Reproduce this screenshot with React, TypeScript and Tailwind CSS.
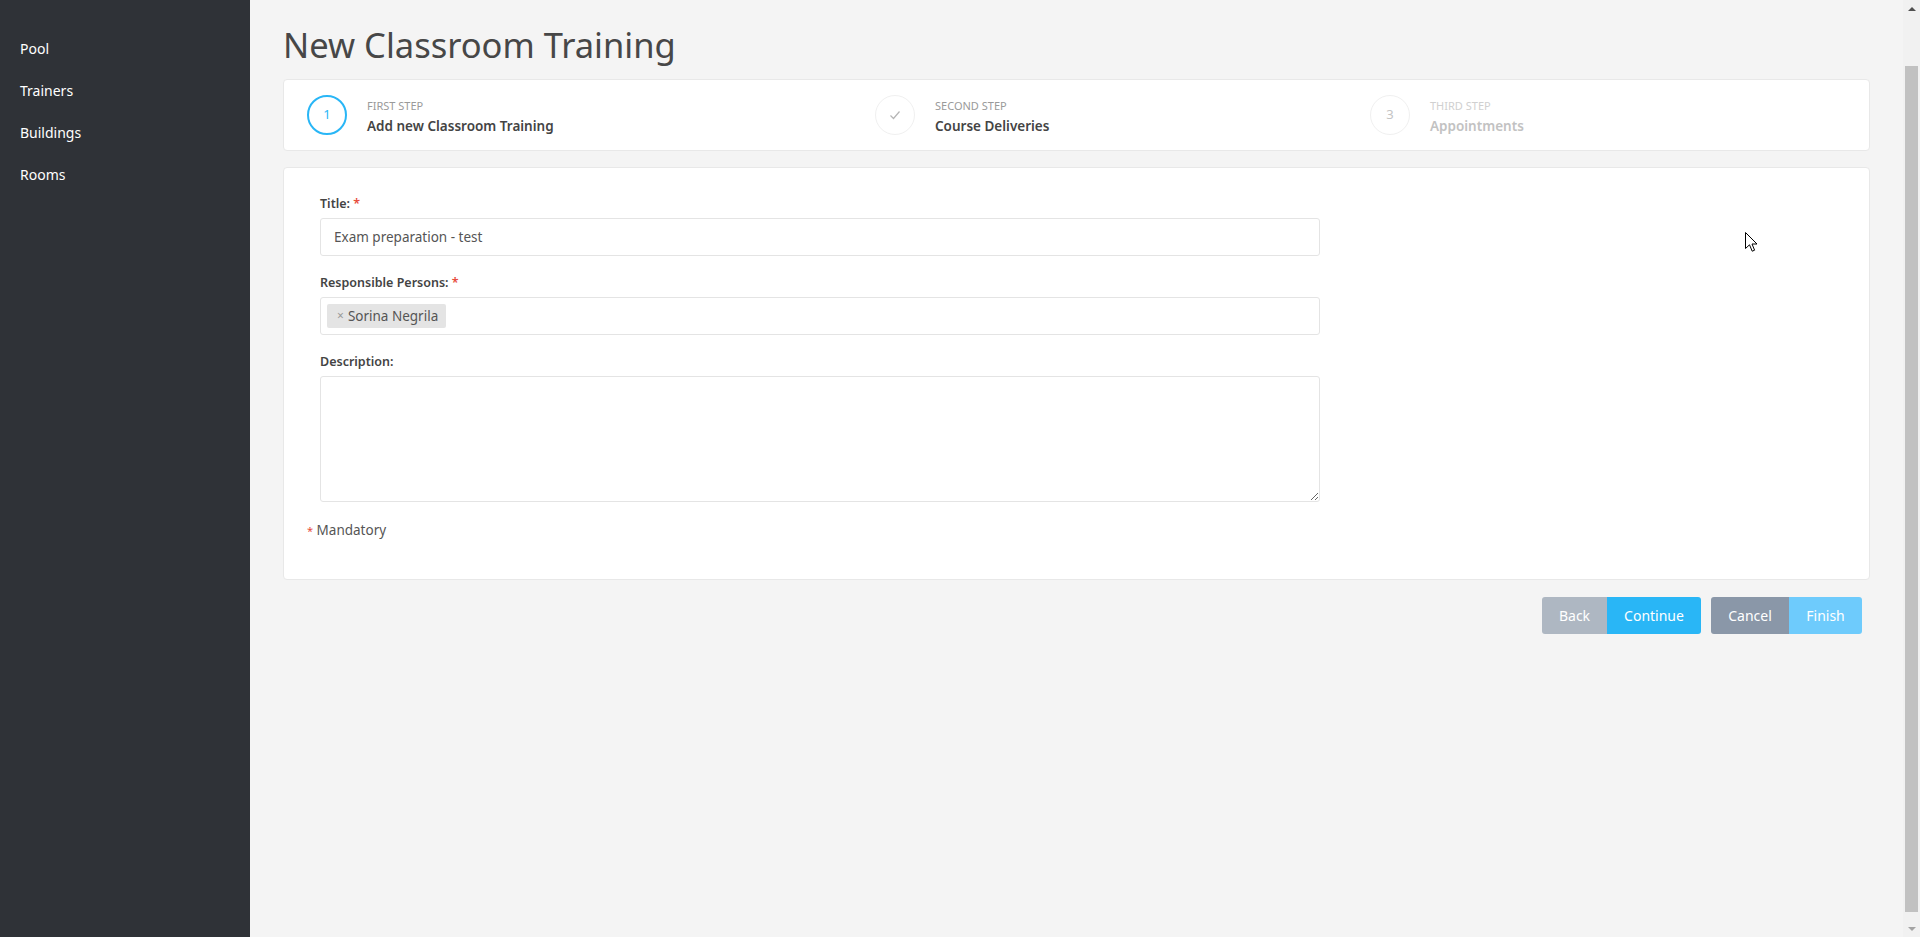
import React from "react";

const font = { fontFamily: '"Noto Sans", "Open Sans", Arial, sans-serif' };

function Check() {
  return (
    <svg width="14" height="14" viewBox="0 0 14 14" fill="none">
      <path d="M2.5 7.5 L5.5 10.5 L11.5 3.5" stroke="#b5b5b5" strokeWidth="1.2" />
    </svg>
  );
}

function Step({
  circle,
  label,
  title,
  variant,
  className,
}: {
  circle: React.ReactNode;
  label: string;
  title: string;
  variant: "active" | "done" | "todo";
  className?: string;
}) {
  const circleCls =
    variant === "active"
      ? "border-2 border-[#29b6f6] text-[#29b6f6]"
      : "border border-[#f0f0f0] text-[#c4c4c4]";
  const labelCls = variant === "todo" ? "text-[#d0d0d0]" : "text-[#9a9a9a]";
  const titleCls =
    variant === "todo" ? "text-[#c2c2c2]" : "text-[#444]";
  return (
    <div className={"flex items-center " + (className ?? "")}>
      <div
        className={
          "flex h-10 w-10 shrink-0 items-center justify-center rounded-full text-[13px] " +
          circleCls
        }
      >
        {circle}
      </div>
      <div className="ml-[20px] mt-[3px] flex flex-col">
        <span className={"text-[11px] uppercase leading-[18px] " + labelCls}>{label}</span>
        <span className={"text-[13.5px] font-semibold leading-[22px] " + titleCls}>{title}</span>
      </div>
    </div>
  );
}

export default function App() {
  return (
    <div className="flex h-[937px] w-[1920px] overflow-hidden bg-[#f4f4f4]" style={font}>
      <aside className="w-[250px] shrink-0 bg-[#2f3237] pt-[28px]">
        {["Pool", "Trainers", "Buildings", "Rooms"].map((t) => (
          <div key={t} className="px-[20px] py-[11px] text-[14px] leading-5 text-white">
            {t}
          </div>
        ))}
      </aside>

      <main className="relative flex-1 px-[33px] pt-[23px]">
        <h1 className="text-[34.5px] leading-[44px] text-[#474747]">New Classroom Training</h1>

        <div className="mt-[12px] flex h-[72px] items-center rounded-[4px] border border-[#e8e8e8] bg-white pl-[23px]">
          <Step className="w-[568px]" circle="1" label="First Step" title="Add new Classroom Training" variant="active" />
          <Step className="w-[495px]" circle={<Check />} label="Second Step" title="Course Deliveries" variant="done" />
          <Step circle="3" label="Third Step" title="Appointments" variant="todo" />
        </div>

        <div className="mt-[16px] rounded-[4px] border border-[#e8e8e8] bg-white pb-[38px] pl-[23px] pt-[27px]">
          <div className="ml-[13px] w-[1000px]">
            <div className="mb-[18px]">
              <label className="mb-[5px] block text-[12.5px] font-semibold leading-[18px] text-[#444]">
                Title: <span className="text-[#e74c3c]">*</span>
              </label>
              <div className="flex h-[38px] items-center rounded-[3px] border border-[#e4e4e4] px-[13px] text-[13.5px] text-[#555]">
                Exam preparation - test
              </div>
            </div>
            <div className="mb-[18px]">
              <label className="mb-[5px] block text-[12.5px] font-semibold leading-[18px] text-[#444]">
                Responsible Persons: <span className="text-[#e74c3c]">*</span>
              </label>
              <div className="flex h-[38px] items-center rounded-[3px] border border-[#e4e4e4] px-[6px]">
                <span className="flex h-[24px] items-center rounded-[2px] bg-[#e4e4e4] pl-[10px] pr-[8px] text-[13.5px] text-[#555]">
                  <span className="text-[12px] text-[#999]">×</span>
                  <span className="ml-[4px]">Sorina Negrila</span>
                </span>
              </div>
            </div>
            <div className="mb-[18px]">
              <label className="mb-[5px] block text-[12.5px] font-semibold leading-[18px] text-[#444]">
                Description:
              </label>
              <textarea className="block h-[126px] w-full rounded-[3px] border border-[#e4e4e4] outline-none" />
            </div>
          </div>
          <div className="text-[13.5px] leading-5 text-[#555]">
            <span className="text-[11px] text-[#e74c3c]">*</span> Mandatory
          </div>
        </div>

        <div className="mr-[8px] mt-[17px] flex justify-end gap-[10px]">
          <div className="flex overflow-hidden rounded-[3px] text-[14px] text-white">
            <div className="flex h-[37px] w-[65px] items-center justify-center bg-[#aeb7c2]">Back</div>
            <div className="flex h-[37px] w-[94px] items-center justify-center bg-[#29b6f6]">Continue</div>
          </div>
          <div className="flex overflow-hidden rounded-[3px] text-[14px] text-white">
            <div className="flex h-[37px] w-[78px] items-center justify-center bg-[#8a97a8]">Cancel</div>
            <div className="flex h-[37px] w-[73px] items-center justify-center bg-[#6ecbfc]">Finish</div>
          </div>
        </div>

        <svg className="absolute left-[1495px] top-[232px]" width="13" height="21" viewBox="0 0 13 21">
          <path d="M0.5 0.5 L0.5 16.5 L4.5 12.8 L7.2 19.2 L9.6 18.2 L7 12 L12 12 Z" fill="white" stroke="black" strokeWidth="1" strokeLinejoin="round" />
        </svg>
      </main>

      <div className="flex w-[17px] shrink-0 flex-col items-center bg-[#f1f1f1]">
        <div className="flex h-[17px] w-full items-center justify-center">
          <div className="h-0 w-0 border-x-[4px] border-b-[4px] border-x-transparent border-b-[#505050]" />
        </div>
        <div className="mt-[49px] h-[846px] w-[13px] bg-[#c1c1c1]" />
        <div className="flex flex-1 items-end justify-center pb-[6px]">
          <div className="h-0 w-0 border-x-[4px] border-t-[4px] border-x-transparent border-t-[#a3a3a3]" />
        </div>
      </div>
    </div>
  );
}
